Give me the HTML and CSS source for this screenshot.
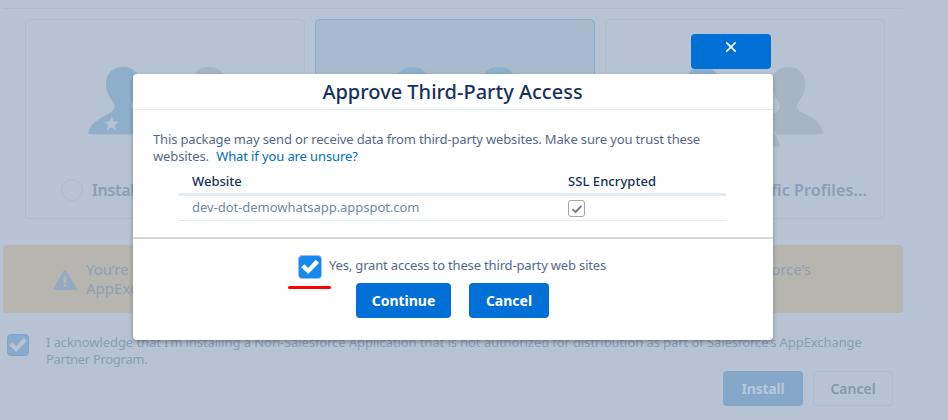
FILE: index.html
```
<!DOCTYPE html>
<html lang="en">
<head>
<meta charset="utf-8">
<title>Install Package</title>
<link rel="stylesheet" href="styles.css">
</head>
<body>
<svg width="0" height="0" class="defs">
  <defs>
    <path id="person" d="M-35 66.500C-31 49-8.500 49-8.500 39.500C-8.500 34-17 29-17 17C-17 6-10 0 0 0C10 0 17 6 17 17C17 29 8.500 34 8.500 39.500C8.500 49 31 46 35 66.500Q34 67.500 20 67.500H-20Q-34 67.500-35 66.500Z"/>
    <path id="front" d="M-35 79.500C-32 60-14 59-14 51C-14 46-20 41-20 30C-20 17-12 10 0 10C12 10 20 17 20 30C20 41 14 46 14 51C14 59 32 61 35 79.500Z"/>
    <path id="check" d="M1.200 9.200L4.300 6.200L8.200 10L15.800 1.800L19 5L8.200 16Z"/>
  </defs>
</svg>
<main class="page">
  <section class="options">
    <div class="card">
      <svg class="people" viewBox="0 0 160 90"><use href="#person" x="38" y="0" class="blue"/><use href="#person" x="124" y="0" class="gray"/><use href="#front" x="83" class="gray outline"/><path class="star" d="M26.500 49.500l2.200 5 5.200 .3-4.100 3.400 1.400 5.200-4.700-2.900-4.700 2.900 1.400-5.200-4.100-3.400 5.200-.3z"/></svg>
      <div class="option tight"><span class="radio"></span>Install for Admins Only</div>
    </div>
    <div class="card selected">
      <svg class="people" viewBox="0 0 160 90"><use href="#person" x="37.500" y="0" class="blue"/><use href="#person" x="123.500" y="0" class="blue"/></svg>
      <div class="option"><span class="radio"></span>Install for All Users</div>
    </div>
    <div class="card">
      <svg class="people" viewBox="0 0 160 90"><use href="#person" x="37.500" y="0" class="blue"/><use href="#person" x="123.500" y="0" class="gray"/><use href="#front" x="80" class="gray outline"/></svg>
      <div class="option end">Install for Specific Profiles...</div>
    </div>
  </section>
  <section class="alert">
    <svg class="warn" viewBox="0 0 24 20"><path d="M12 0Q12.800 0 13.400 1L23.500 18Q24.300 20 22.500 20H1.500Q-.3 20 .5 18L10.600 1Q11.200 0 12 0Z"/><path class="mark" d="M10.600 6.500h2.800v6.200h-2.800zM10.600 14h2.800v2.600h-2.800z"/></svg>
    <div class="alert-text"><p class="spread"><span>You’re installing a Non-Salesforce Application</span><span>Salesforce’s</span></p><p>AppExchange Partner Program.</p></div>
  </section>
  <section class="ack">
    <span class="box muted"><svg viewBox="0 0 20 18"><use href="#check"/></svg></span>
    <div class="ack-text"><p class="ack-one">I acknowledge that I’m installing a Non-Salesforce Application that is not authorized for distribution as part of Salesforce’s AppExchange</p><p class="ack-two">Partner Program.</p></div>
  </section>
  <section class="page-actions"><button class="install">Install</button><button class="plain">Cancel</button></section>
</main>
<div class="overlay">
  <button class="close" aria-label="Close"><svg viewBox="0 0 12 12"><path d="M1.300 1.300L10.700 10.700M10.700 1.300L1.300 10.700"/></svg></button>
  <section class="modal">
    <header><h1>Approve Third-Party Access</h1></header>
    <div class="content">
      <p class="lead">This package may send or receive data from third-party websites. Make sure you trust these</p>
      <p class="second"><span>websites.</span> <a>What if you are unsure?</a></p>
      <table>
        <thead><tr><th class="site"><span>Website</span></th><th><span class="ssl">SSL Encrypted</span></th></tr></thead>
        <tbody><tr><td class="site"><span>dev-dot-demowhatsapp.appspot.com</span></td><td><span class="mini"><svg viewBox="0 0 12 12"><path d="M1.500 6.200L4.600 9L10.300 3"/></svg></span></td></tr></tbody>
      </table>
    </div>
    <footer>
      <div class="grant"><span class="grant-box"><span class="box bright"><svg viewBox="0 0 20 18"><use href="#check"/></svg></span><i class="redline"></i></span><span class="grant-text">Yes, grant access to these third-party web sites</span></div>
      <div class="actions"><button class="continue">Continue</button><button class="cancel">Cancel</button></div>
    </footer>
  </section>
</div>
</body>
</html>
```
FILE: styles.css
```
* { box-sizing: border-box; }
body { margin: 0; width: 948px; height: 420px; overflow: hidden; background: #b7c3d2; font-family: "Noto Sans", "Open Sans", sans-serif; font-size: 13px; }
p, h1 { margin: 0; white-space: nowrap; font-weight: 400; }
button { border: 0; border-radius: 4px; padding: 0; font: 700 14px/35px "Noto Sans", sans-serif; height: 35px; width: 80px; }
.defs { position: absolute; }
.page { width: 900px; margin-left: 3px; padding-top: 8px; }
.options { border-top: 1px solid #adbbca; padding: 10px 18px 0 22px; display: flex; gap: 10px; }
.card { width: 280px; height: 200px; border: 1px solid #adbbca; border-radius: 5px; overflow: hidden; display: flex; flex-direction: column; align-items: center; padding-top: 47px; }
.selected { background: #a8bbce; border-color: #89adca; }
.people { width: 160px; height: 90px; flex: none; }
.blue { fill: #8dafcc; }
.gray { fill: #a7b5c3; }
.outline { stroke: #b7c3d2; stroke-width: 4px; paint-order: stroke; }
.star { fill: #b7c3d2; }
.option { align-self: stretch; display: flex; align-items: center; gap: 9px; height: 24px; margin-top: 21px; padding-left: 35px; color: #8b9fb8; font-size: 16px; font-weight: 600; white-space: nowrap; letter-spacing: .1px; }
.option.tight { letter-spacing: -.3px; }
.option.end { justify-content: flex-end; padding-right: 17px; }
.radio { width: 22px; height: 22px; border: 1px solid #adbbca; border-radius: 50%; }
.alert { margin-top: 26px; height: 68px; border-radius: 4px; background: #b7b5af; display: flex; padding: 25px 0 0 50px; gap: 9px; }
.warn { width: 24px; height: 20px; flex: none; fill: #94a9c2; }
.warn .mark { fill: #b7b5af; }
.alert-text { width: 725px; margin-top: -10px; color: #8ea0b2; font-size: 15px; line-height: 19px; }
.spread { display: flex; justify-content: space-between; }
.ack { margin-top: 21px; display: flex; padding-left: 4px; gap: 17px; color: #899eb1; font-size: 13px; line-height: 17px; }
.ack-one { letter-spacing: -.08px; }
.ack-two { letter-spacing: -.3px; }
.box { width: 22px; height: 22px; border-radius: 4px; display: flex; align-items: center; justify-content: center; flex: none; }
.box svg { width: 20px; height: 18px; flex: none; }
.muted { background: #87aace; border: 1px solid #7fa5cb; }
.muted svg { fill: #b7c3d2; }
.page-actions { display: flex; justify-content: flex-end; gap: 10px; margin: 3px 10px 0 0; }
.install { background: #84a7ca; color: #b7c8da; letter-spacing: -.2px; }
.plain { background: transparent; border: 1px solid #adbbca; color: #8798aa; font-weight: 600; line-height: 33px; }
.overlay { position: absolute; top: 34px; left: 133px; width: 640px; display: flex; flex-direction: column; align-items: flex-end; gap: 5px; }
.close { background: #0070d6; margin-right: 2px; display: flex; justify-content: center; padding-top: 7px; }
.close svg { width: 12px; height: 12px; fill: none; stroke: #fff; stroke-width: 1.700; }
.modal { width: 640px; height: 266px; background: #fff; border-radius: 4px; box-shadow: 0 2px 4px rgba(0,0,0,.3); color: #54698d; }
header { height: 36px; border-bottom: 1px solid #e1ecf5; text-align: center; }
h1 { font-size: 20px; line-height: 35px; font-weight: 500; color: #16325c; margin-left: -1px; }
.content { height: 129px; padding: 21px 47px 0 20px; line-height: 17px; border-bottom: 2px solid #d8d8d8; }
.lead { letter-spacing: -.142px; }
.second { letter-spacing: -.11px; }
.second span { margin-right: 4px; }
a { color: #0070b8; }
table { margin: 8px 0 0 26px; width: 547px; border-collapse: separate; border-spacing: 0; table-layout: fixed; line-height: 17px; }
th, td { padding: 0; text-align: left; font-weight: 400; vertical-align: top; }
.site { width: 389px; padding-left: 13px; }
thead th { height: 23px; border-bottom: 3px solid #e1ecf5; font-weight: 500; color: #16325c; }
.ssl { letter-spacing: .06px; }
tbody td { height: 25px; padding-top: 4px; border-bottom: 1px solid #e1ecf5; color: #708a9f; }
tbody .site { padding-top: 3px; letter-spacing: -.04px; }
.mini { display: flex; width: 17px; height: 17px; border: 1px solid #a6a6a6; border-radius: 3px; align-items: center; justify-content: center; }
.mini svg { width: 12px; height: 12px; fill: none; stroke: #808080; stroke-width: 2; }
footer { padding-top: 16px; }
.grant { display: flex; margin-left: 165px; height: 28px; gap: 7px; }
.grant-box { position: relative; display: block; width: 24px; height: 24px; }
.bright { width: 24px; height: 24px; background: #1589ee; border: 1px solid #9fbdf4; }
.bright svg { fill: #fff; }
.redline { position: absolute; left: -10.500px; top: 30.500px; width: 43px; height: 3px; border-radius: 2px; background: #f00; }
.grant-text { line-height: 21px; white-space: nowrap; letter-spacing: -.165px; }
.actions { display: flex; gap: 18px; margin-left: 223px; }
.actions button { background: #0070d6; color: #fff; }
.actions .continue { width: 95px; }
```
